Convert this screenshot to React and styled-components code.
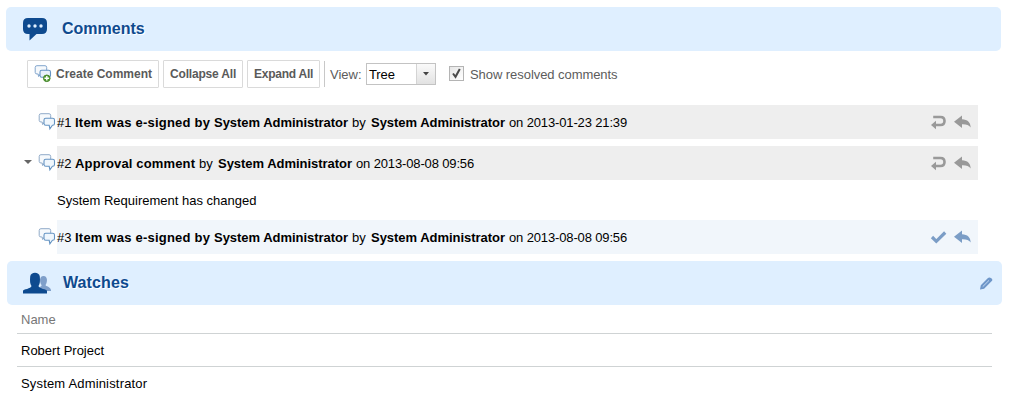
import React from 'react';
import styled, { createGlobalStyle } from 'styled-components';

const GlobalStyle = createGlobalStyle`
  * { box-sizing: border-box; }
  body {
    margin: 0;
    background: #fff;
    color: #000;
    font: 13px/16px "Liberation Sans", Arial, sans-serif;
  }
`;

const Page = styled.main`
  width: 1011px;
  height: 417px;
  padding-top: 7px;
  overflow: hidden;
`;

const SectionHeader = styled.header`
  display: flex;
  align-items: center;
  width: 995px;
  height: 44px;
  margin-left: ${(p) => p.$left}px;
  padding: 0 9px 0 16px;
  border-radius: 5px;
  background: #dfefff;
`;

const HeaderIcon = styled.svg`
  flex: none;
  width: 30px;
  height: 24px;
`;

const Title = styled.h2`
  margin: 0 auto 0 10px;
  color: #0e4a8f;
  font-size: 16px;
  line-height: 20px;
  letter-spacing: ${(p) => p.$spacing || 0}px;
  text-shadow: 1px 1px 0 #fff;
`;

const Toolbar = styled.div`
  display: flex;
  align-items: center;
  height: 28px;
  margin: 9px 0 17px 27px;
  color: #5c5c5c;
`;

const Button = styled.button`
  display: flex;
  align-items: center;
  width: ${(p) => p.$width}px;
  height: 28px;
  margin-right: 4px;
  padding: 0 0 0 6px;
  border: 1px solid #dadada;
  border-radius: 1px;
  background: #fff;
  color: #5a5a5a;
  font: bold 12px/16px "Liberation Sans", Arial, sans-serif;
  letter-spacing: ${(p) => p.$spacing || 0}px;
  white-space: nowrap;
`;

const ButtonIcon = styled.svg`
  width: 18px;
  height: 18px;
  margin-right: 4px;
`;

const Separator = styled.span`
  width: 1px;
  height: 26px;
  margin-right: 5px;
  background: #c8c8c8;
`;

const ViewLabel = styled.span`
  width: 36px;
  padding-top: 2px;
  white-space: nowrap;
`;

const Combo = styled.div`
  display: flex;
  width: 70px;
  height: 22px;
  margin-right: 13px;
  border: 1px solid #c3c3c3;
  color: #000;
`;

const ComboValue = styled.span`
  flex: 1;
  padding: 3px 0 0 2px;
  line-height: 16px;
  letter-spacing: -0.1px;
`;

const ComboArrow = styled.span`
  display: flex;
  align-items: center;
  justify-content: center;
  width: 19px;
  border-left: 1px solid #d4d4d4;
  background: linear-gradient(#fafafa, #e2e2e2);
`;

const CheckBox = styled.span`
  display: flex;
  width: 15px;
  height: 15px;
  margin: 0 6px 1px 0;
  border: 1px solid #b4b4b4;
  background: linear-gradient(135deg, #e6e6e6, #fff);
`;

const CheckLabel = styled.span`
  padding-top: 2px;
  letter-spacing: -0.06px;
  white-space: nowrap;
`;

const CommentRow = styled.div`
  display: flex;
  align-items: center;
  height: 34px;
  margin: 0 33px 7px 23px;
`;

const Toggle = styled.span`
  display: flex;
  width: 15px;
  padding: 0 0 3px 1px;
`;

const BubbleIcon = styled.svg`
  width: 18px;
  height: 18px;
  margin-right: 1px;
`;

const CommentBar = styled.div`
  display: flex;
  flex: 1;
  align-items: center;
  height: 34px;
  padding-right: 7px;
  background: ${(p) => (p.$resolved ? '#f1f6fb' : '#eee')};
  color: #000;
`;

const Segment = styled.span`
  flex: none;
  width: ${(p) => p.$width}px;
  padding-top: 2px;
  font-weight: ${(p) => (p.$bold ? 700 : 400)};
  letter-spacing: ${(p) => p.$spacing || 0}px;
  white-space: nowrap;
`;

const Actions = styled.div`
  display: flex;
  gap: 7px;
  margin-left: auto;
  color: ${(p) => (p.$resolved ? '#7b9dc6' : '#999')};
`;

const ActionIcon = styled.svg`
  width: 17px;
  height: 16px;
`;

const CommentBody = styled.p`
  height: 16px;
  margin: 13px 0 11px 57px;
`;

const Table = styled.div`
  width: 975px;
  margin-left: 17px;
`;

const Row = styled.div`
  height: ${(p) => (p.$head ? 29 : 33)}px;
  padding: ${(p) => (p.$head ? 7 : 9)}px 4px 0;
  border-bottom: ${(p) => (p.$last ? 'none' : '1px solid #cfd3d4')};
  color: ${(p) => (p.$head ? '#777' : '#000')};
  letter-spacing: ${(p) => p.$spacing || 0}px;
`;

const backBubble = 'M3 .7h8q1.700 0 1.700 1.700v5q0 1.700-1.700 1.700H6.500L4.500 11.500 4.200 9H3Q1.200 9 1.200 7.400v-5Q1.200.7 3 .7z';
const frontBubble = 'M7.700 5.300h7q1.800 0 1.800 1.700v3.500q0 1.800-1.800 1.800h-.3l-2.500 3.500-.7-3.500H7.700Q6 12.300 6 10.500V7q0-1.700 1.700-1.700z';

function Bubbles() {
  return (
    <BubbleIcon viewBox="0 0 18 18">
      <path d={backBubble} fill="#f6f9fc" stroke="#91abc9" />
      <path d={frontBubble} fill="#f0f7fd" stroke="#6594c3" strokeWidth="1.100" />
    </BubbleIcon>
  );
}

function Comment({ parts, open, resolved }) {
  return (
    <CommentRow>
      <Toggle>
        {open && (
          <svg width="8" height="4"><path d="M0 0h8L4 4z" fill="#666" /></svg>
        )}
      </Toggle>
      <Bubbles />
      <CommentBar $resolved={resolved}>
        {parts.map(([text, width, bold, spacing], i) => (
          <Segment key={i} $width={width} $bold={bold} $spacing={spacing}>{text}</Segment>
        ))}
        <Actions $resolved={resolved}>
          <ActionIcon viewBox="0 0 17 16">
            {resolved ? (
              <path d="M2 8l4.300 4.300L15.200 3.500" fill="none" stroke="currentColor" strokeWidth="3.200" />
            ) : (
              <>
                <path d="M3.200 3h7.300Q14.500 3 14.500 7t-4 4H5" fill="none" stroke="currentColor" strokeWidth="2.600" />
                <path d="M1 11l5-4.300v8.600z" fill="currentColor" />
              </>
            )}
          </ActionIcon>
          <ActionIcon viewBox="0 0 17 16">
            <path d="M0 7.800L8 1.500v3.700c5.500.3 8.600 3 8.700 8.300-1.800-2.500-4.200-3.300-8.700-3.200V14z" fill="currentColor" />
          </ActionIcon>
        </Actions>
      </CommentBar>
    </CommentRow>
  );
}

const author = ['System Administrator', 138, true, -0.03];
const signed = (num, date) => [
  [num, 18],
  ['Item was e-signed by', 139, true, 0.22],
  author,
  ['by', 19],
  author,
  [`on ${date}`, 120, false, -0.14],
];

export default function App() {
  return (
    <>
      <GlobalStyle />
      <Page>
        <SectionHeader $left={6}>
          <HeaderIcon viewBox="0 0 30 24">
            <path d="M6 1h14q5 0 5 5v6q0 5-5 5h-5.500L7.500 23.500V17H6q-5 0-5-5V6q0-5 5-5z" fill="#0e4a8f" />
            <g fill="#dfefff">
              <circle cx="7" cy="9" r="1.700" />
              <circle cx="13" cy="9" r="1.700" />
              <circle cx="19" cy="9" r="1.700" />
            </g>
          </HeaderIcon>
          <Title>Comments</Title>
        </SectionHeader>

        <Toolbar>
          <Button $width={132}>
            <ButtonIcon viewBox="0 0 18 18">
              <path d={backBubble} fill="#f6f9fc" stroke="#82a5cd" />
              <path d={frontBubble} fill="#e8f1fb" stroke="#6594c3" strokeWidth="1.100" />
              <circle cx="12.800" cy="13.300" r="3.300" fill="#4c9a2e" stroke="#4c8a2e" />
              <path d="M12.800 11v4.600M10.500 13.300h4.600" stroke="#fff" strokeWidth="1.400" />
            </ButtonIcon>
            Create Comment
          </Button>
          <Button $width={80} $spacing={-0.18}>Collapse All</Button>
          <Button $width={73} $spacing={-0.25}>Expand All</Button>
          <Separator />
          <ViewLabel>View:</ViewLabel>
          <Combo>
            <ComboValue>Tree</ComboValue>
            <ComboArrow>
              <svg width="6" height="4"><path d="M0 0h6L3 3.500z" fill="#444" /></svg>
            </ComboArrow>
          </Combo>
          <CheckBox>
            <svg width="13" height="13"><path d="M3 6.500l2.500 3.300L9.800 2" fill="none" stroke="#4a4a4a" strokeWidth="2" /></svg>
          </CheckBox>
          <CheckLabel>Show resolved comments</CheckLabel>
        </Toolbar>

        <Comment parts={signed('#1', '2013-01-23 21:39')} />
        <Comment
          open
          parts={[
            ['#2', 18],
            ['Approval comment', 124, true, 0.15],
            ['by', 19],
            author,
            ['on 2013-08-08 09:56', 120, false, -0.14],
          ]}
        />
        <CommentBody>System Requirement has changed</CommentBody>
        <Comment resolved parts={signed('#3', '2013-08-08 09:56')} />

        <SectionHeader $left={7}>
          <HeaderIcon viewBox="0 0 30 24">
            <path d="M15 20V16.500c2.500-.8 3.600-1 3.600-2.500C16.500 11.500 16 5 20.500 5s4 6.500 2 9c0 1.500 5.500 1.500 5.500 5.500V20z" fill="#7f9fca" />
            <path d="M0 22.500V20c0-2 8-2 8.500-5C7 13 6.800 10 7.200 5.500c.5-5 9.100-5 9.600 0 .4 4.500.2 7.500-1.300 9.500C16 18 24 18 24 20v2.500z" fill="#0e4a8f" />
          </HeaderIcon>
          <Title $spacing={0.1}>Watches</Title>
          <svg width="14" height="14" viewBox="0 0 14 14">
            <path d="M1 13.500l.8-4.300L8.700 2.300q1.500-1.700 3.600 0t0 3.300L5.100 12.800z" fill="#6e96c9" />
            <path d="M3.700 10.700L10 4.400" stroke="#c5daf2" />
          </svg>
        </SectionHeader>

        <Table>
          <Row $head>Name</Row>
          <Row>Robert Project</Row>
          <Row $last $spacing={0.17}>System Administrator</Row>
        </Table>
      </Page>
    </>
  );
}
